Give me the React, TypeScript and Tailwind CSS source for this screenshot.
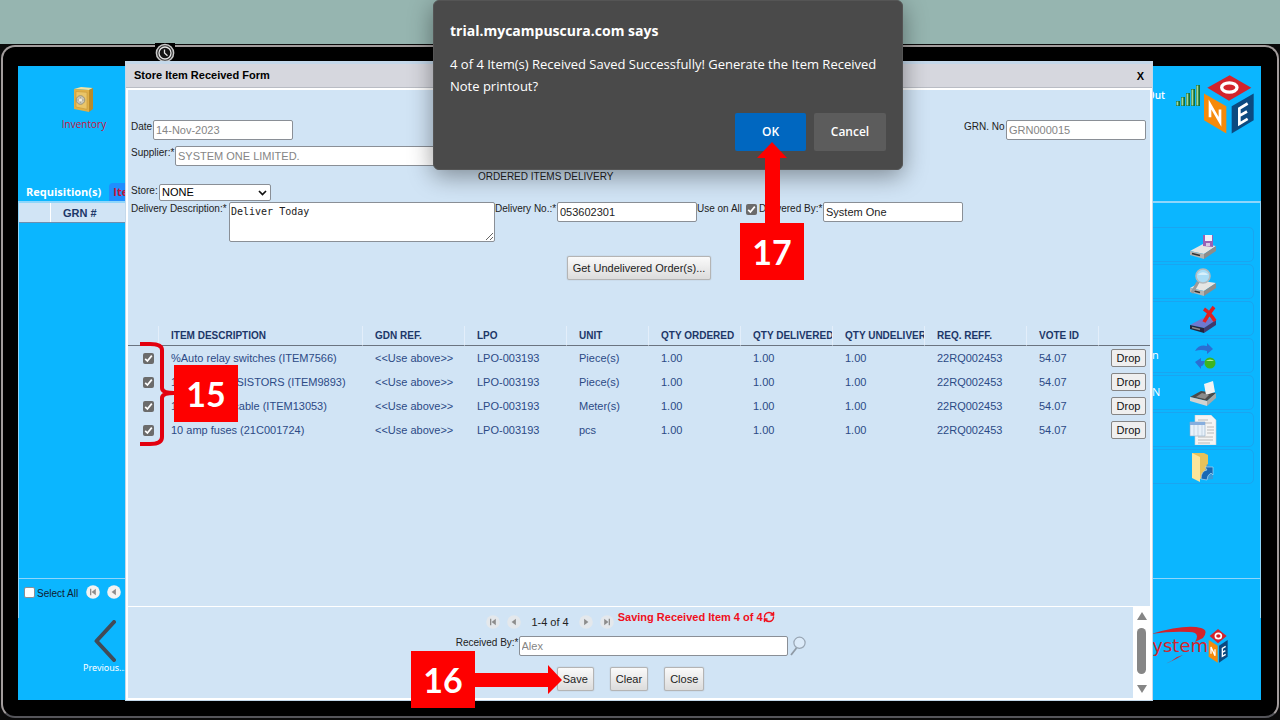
import type { ReactNode } from "react";
import { RefreshCw } from "lucide-react";

type Item = { name: string; lpo: string; unit: string };

const ITEMS: Item[] = [
  { name: "%Auto relay switches (ITEM7566)", lpo: "LPO-003193", unit: "Piece(s)" },
  { name: "100 OHM RESISTORS (ITEM9893)", lpo: "LPO-003193", unit: "Piece(s)" },
  { name: "16mm Coax cable (ITEM13053)", lpo: "LPO-003193", unit: "Meter(s)" },
  { name: "10 amp fuses (21C001724)", lpo: "LPO-003193", unit: "pcs" },
];

const HEADERS = [
  "ITEM DESCRIPTION",
  "GDN REF.",
  "LPO",
  "UNIT",
  "QTY ORDERED",
  "QTY DELIVERED",
  "QTY UNDELIVERED",
  "REQ. REFF.",
  "VOTE ID",
];

const FIELD =
  "h-5 rounded-[2px] border border-[#8a8f96] bg-white px-[2px] text-[11px] leading-4 text-[#222] disabled:text-[#858585]";
const LABEL = "shrink-0 whitespace-nowrap text-[10px] leading-[14px]";
const SOFT_BUTTON =
  "h-6 rounded-[2px] border border-[#b4b4b4] bg-linear-to-b from-[#fafafa] to-[#dcdcdc] px-[5px] text-[11px] leading-4 text-[#222] shadow-[0_0_1px_#999]";

function Tick({ id, label }: { id: string; label: string }) {
  return (
    <span className="relative inline-flex h-[11px] w-[11px] shrink-0">
      <input
        id={id}
        type="checkbox"
        aria-label={label}
        defaultChecked
        className="h-[11px] w-[11px] appearance-none rounded-[2px] bg-white checked:bg-[#6b6b6b]"
      />
      <svg viewBox="0 0 11 11" className="pointer-events-none absolute inset-0" aria-hidden="true">
        <path d="M2.2 5.8 4.4 8 8.8 2.6" fill="none" stroke="#fff" strokeWidth="1.7" />
      </svg>
    </span>
  );
}

function PagerButton({ label, kind, strong }: { label: string; kind: "first" | "prev" | "next" | "last"; strong?: boolean }) {
  const flip = kind === "next" || kind === "last";
  const bar = kind === "first" || kind === "last";
  return (
    <button type="button" aria-label={label} className="h-[14px] w-[14px] shrink-0">
      <svg viewBox="0 0 14 14" className="h-full w-full" aria-hidden="true">
        <circle cx="7" cy="7" r="6.8" fill={strong ? "#f4f3f1" : "#e4e8ec"} />
        <g transform={flip ? "matrix(-1 0 0 1 14 0)" : undefined} fill="#8d8d8d">
          <path d={bar ? "M9.8 3.8v6.4L5.6 7z" : "M8.9 3.8v6.4L4.6 7z"} />
          {bar && <path d="M4 3.8h1.3v6.4H4z" />}
        </g>
      </svg>
    </button>
  );
}

function Cube() {
  return (
    <svg viewBox="0 0 150 176" className="h-[59px] w-[50px]" role="img" aria-label="ONE">
      <path d="M77 0 142 38 75 77 10 38z" fill="#d3242c" />
      <path d="M0 55 67 93v82L0 135z" fill="#f58a0c" />
      <path d="M83 93 149 55v80l-66 40z" fill="#0c4a80" />
      <ellipse cx="76" cy="37" rx="23" ry="14" fill="none" stroke="#fff" strokeWidth="10" />
      <path d="M18 126V88l30 52V103" fill="none" stroke="#fff" strokeWidth="8" />
      <path d="M131 85l-25 15v46l25-15M106 122l23-13" fill="none" stroke="#fff" strokeWidth="8" />
    </svg>
  );
}

function SmallCube() {
  return (
    <svg viewBox="0 0 60 102" className="h-[34px] w-5" role="img" aria-label="ONE">
      <path d="M30 0 56 21 30 43 5 21z" fill="#d3242c" />
      <path d="M2 33 29 50v51L2 83z" fill="#f58a0c" />
      <path d="M33 50 59 33v50L33 101z" fill="#0c4a80" />
      <ellipse cx="31" cy="21" rx="9" ry="8" fill="none" stroke="#fff" strokeWidth="5" />
      <path d="M9 74V54l12 26V61" fill="none" stroke="#fff" strokeWidth="4" />
      <path d="M53 52l-10 6v24l10-6M43 70l9-5" fill="none" stroke="#fff" strokeWidth="4" />
    </svg>
  );
}

function SafeIcon() {
  return (
    <svg viewBox="0 0 24 28" className="h-7 w-6" aria-hidden="true">
      <path d="M2 3 9 1l12 1-4 2z" fill="#f6e2a0" />
      <path d="M2 3l15 1v22L2 23z" fill="#e0b046" />
      <path d="M17 4l4-2v21l-4 3z" fill="#b98a2a" />
      <path d="M4 5.500l11 .8v17L4 21z" fill="#eac568" stroke="#c7983a" strokeWidth=".6" />
      <circle cx="8.500" cy="14" r="4.300" fill="#c9c6b8" stroke="#8c8874" strokeWidth=".8" />
      <path d="M8.500 11v6M5.500 14h6" stroke="#a5a18c" strokeWidth=".9" />
      <circle cx="8.500" cy="14" r="1.600" fill="#f2f0e6" />
    </svg>
  );
}

function Drive({ dark }: { dark?: boolean }) {
  return (
    <g>
      <path d="M1 21 14 14l13 2-12 8z" fill={dark ? "#6f78cf" : "#e6e6e4"} />
      <path d="M1 21l14 3v5L1 25z" fill={dark ? "#24243c" : "#b4b4b2"} />
      <path d="M15 24l12-8v5l-12 8z" fill={dark ? "#3f3a6e" : "#8d8d8b"} />
      <path d="M3 23.500l8 2" stroke={dark ? "#888" : "#333"} strokeWidth="1.400" />
    </g>
  );
}

const ACTIONS: { label: string; tail?: string; icon: ReactNode }[] = [
  {
    label: "Save record",
    icon: (
      <>
        <Drive />
        <path d="M14 5h10v12l-10-1z" fill="#9b62b4" />
        <path d="M16 5h7v6h-7z" fill="#f3f0f8" />
        <path d="M17 13h4v3h-4z" fill="#d9c8e4" />
      </>
    ),
  },
  {
    label: "Search records",
    icon: (
      <>
        <Drive />
        <path d="M9 15 3 26" stroke="#9a9a9a" strokeWidth="3" />
        <circle cx="14" cy="9" r="7" fill="#a9dcf6" stroke="#b4babd" strokeWidth="1.600" />
        <path d="M9 8a6 6 0 0 1 10 0z" fill="#d7f0fc" />
      </>
    ),
  },
  {
    label: "Delete record",
    icon: (
      <>
        <Drive dark />
        <path d="M15 5q6 4 11 12M25 3q-5 6-10 15" stroke="#df2020" strokeWidth="3.600" fill="none" />
      </>
    ),
  },
  {
    label: "Reload selection",
    tail: "n",
    icon: (
      <>
        <path d="M6 10Q10 3 18 5V2l6 6-6 5v-3q-6-2-12 0z" fill="#2b6fd2" />
        <path d="M16 20q-2 6-4 5v3l-6-7 6-4v3z" fill="#2b6fd2" />
        <circle cx="21" cy="22" r="5.500" fill="#3fb51f" />
        <path d="M17 20a5 4 0 0 1 8 0z" fill="#b4ec92" />
      </>
    ),
  },
  {
    label: "Print GRN",
    tail: "N",
    icon: (
      <>
        <path d="M1 19 12 13l15 2-9 8z" fill="#4b4b4b" />
        <path d="M15 6l9-3 2 11-9 3z" fill="#f3f3f3" />
        <path d="M1 19l17 4v5L1 23z" fill="#d2d2d0" />
        <path d="M18 23l9-8v5l-9 8z" fill="#a8a8a6" />
        <path d="M7 19l6-4 7 2-4 4z" fill="#8b8b8b" />
      </>
    ),
  },
  {
    label: "View report",
    icon: (
      <>
        <path d="M6 0h16l5 5v25H6z" fill="#f4f4f4" stroke="#c9ced2" strokeWidth=".6" />
        <path d="M9 5h10M9 8h14M18 12h7M18 15h7M18 18h7M9 22h15M9 25h15M9 28h12" stroke="#b9b9b9" strokeWidth="1.200" />
        <path d="M1 7h15v14H1z" fill="#e8f1fa" stroke="#8eabc8" strokeWidth=".6" />
        <path d="M1 7h15v3H1z" fill="#86aede" />
        <path d="M5 10v11M9 10v11M13 10v11" stroke="#b9c9d9" strokeWidth=".7" />
      </>
    ),
  },
  {
    label: "Open folder",
    icon: (
      <>
        <path d="M3 1h12l4 2v22l-8 2z" fill="#e6c25a" />
        <path d="M3 1l8 4v25l-8-4z" fill="#fbe59a" />
        <path d="M18 12l6 4v11l-10 1z" fill="#3a9bd8" />
        <path d="M12 27q0-8 6-9l-2-3h8v8l-2-2q-4 2-4 7z" fill="#1668b4" stroke="#bfe3f8" strokeWidth=".6" />
      </>
    ),
  },
];

function SignalBars() {
  return (
    <svg viewBox="0 0 26 22" className="h-[22px] w-[26px]" aria-hidden="true">
      {[0, 1, 2, 3, 4].map((i) => (
        <g key={i}>
          <rect x={1 + i * 5} y={17 - i * 4} width="4" height={5 + i * 4} fill="#15703a" />
          <rect x={1.5 + i * 5} y={17.500 - i * 4} width="1.800" height={4 + i * 4} fill="#a5d79c" />
        </g>
      ))}
    </svg>
  );
}

function Background() {
  return (
    <div className="flex flex-1 flex-col overflow-hidden bg-[#0bb6ff] font-['Open_Sans',sans-serif] text-[11px] text-white">
      <header className="flex h-[135px] shrink-0 justify-between">
        <div className="flex flex-col pl-2">
          <a href="#inventory" className="ml-[36px] flex w-[44px] flex-col items-center pt-5 text-[10px] text-[#c8143c]">
            <SafeIcon />
            <span className="leading-5">Inventory</span>
          </a>
          <nav className="mt-auto flex items-center font-bold">
            <a href="#requisitions" className="leading-[18px]">Requisition(s)</a>
            <a href="#received" className="ml-[8px] rounded-t-[4px] bg-[#1f8fff] px-1 leading-[18px] text-[#c8143c]">
              Items Received
            </a>
          </nav>
        </div>
        <div className="flex items-start pr-[7px] pt-[9px]">
          <a href="#signout" className="mt-[11px] text-[10px] font-semibold leading-[18px]">Sign Out</a>
          <span className="ml-[10px] mt-[9px]"><SignalBars /></span>
          <span className="ml-[3px]"><Cube /></span>
        </div>
      </header>
      <div className="flex flex-1 flex-col border-x border-t-2 border-[#8fd6fb]">
        <div className="flex flex-1">
          <div className="flex-1">
            <div className="flex h-5 w-full border-b border-[#6c8fb0] bg-[#d1e4f5] font-['Liberation_Sans',sans-serif] text-[11px] font-bold leading-5 text-[#1d3768]">
              <span className="w-8 border-r border-white" />
              <span className="pl-[12px]">GRN #</span>
            </div>
          </div>
          <ul className="flex w-[140px] flex-col gap-[2px] pr-[6px] pt-6">
            {ACTIONS.map((a) => (
              <li key={a.label}>
                <button
                  type="button"
                  aria-label={a.label}
                  className="flex h-[35px] w-full items-center rounded-[5px] border border-[#1aa5f0] pl-[31px]"
                >
                  <span className="w-[6px] text-right text-[11px]">{a.tail}</span>
                  <svg viewBox="0 0 28 30" className="ml-[31px] h-[30px] w-7" aria-hidden="true">
                    {a.icon}
                  </svg>
                </button>
              </li>
            ))}
          </ul>
        </div>
        <div className="flex h-10 shrink-0 items-start border-t border-[#8fd6fb] pl-[5px] pt-[6px] font-['Liberation_Sans',sans-serif] text-[10px] text-[#102030]">
          <input id="select-all" type="checkbox" className="mt-[2px] h-[11px] w-[11px] appearance-none rounded-[2px] border border-[#8a8f96] bg-white" />
          <label htmlFor="select-all" className="ml-[2px] w-[42px] whitespace-nowrap leading-[18px]">Select All</label>
          <span className="ml-[7px] flex gap-[7px]">
            <PagerButton label="First records" kind="first" strong />
            <PagerButton label="Previous records" kind="prev" strong />
          </span>
        </div>
      </div>
      <footer className="flex h-[82px] shrink-0 justify-between">
        <a href="#previous" className="ml-[65px] flex flex-col items-start font-['Noto_Sans',sans-serif] text-[9px]">
          <svg viewBox="0 0 22 42" className="ml-[11px] mt-[2px] h-[42px] w-[22px]" aria-hidden="true">
            <path d="M20 2 2.500 21 20 40" fill="none" stroke="#424b57" strokeWidth="4" strokeLinecap="round" strokeLinejoin="round" />
          </svg>
          <span className="leading-3">Previous...</span>
        </a>
        <div className="relative flex items-start pr-[33px] pt-[11px]">
          <svg viewBox="0 0 64 40" className="absolute right-[52px] top-[8px] h-10 w-16" aria-hidden="true">
            <path d="M6 8Q40-2 56 2q8 2 2 10l-8 4q6-10-6-10Q26 5 6 8z" fill="#d3242c" />
            <path d="M20 38q8-3 18-9l-6 2q-6 5-12 7z" fill="#d3242c" />
          </svg>
          <span className="pt-[5px] font-['DejaVu_Sans',sans-serif] text-[18px] leading-6 text-[#d3242c]">System</span>
          <SmallCube />
        </div>
      </footer>
    </div>
  );
}

function ReceivedForm() {
  return (
    <section
      aria-label="Store Item Received Form"
      className="absolute bottom-[19px] left-[125px] right-[127px] top-[61px] flex flex-col border border-t-[3px] border-[#c4d8ea] bg-white font-['Liberation_Sans',sans-serif] text-[11px] text-[#222]"
    >
      <div className="flex h-6 shrink-0 items-center justify-between border-b border-[#b9bcc4] bg-[#d6d7de] px-2 font-bold text-black">
        <h1>Store Item Received Form</h1>
        <button type="button" aria-label="Close form" className="leading-4">X</button>
      </div>
      <div className="mx-[2px] mt-[2px] flex-1 bg-[#d1e4f5] pt-[30px]">
        <div className="flex items-start pl-[3px] pr-1">
          <label htmlFor="date" className={`${LABEL} w-[22px]`}>Date</label>
          <input id="date" disabled defaultValue="14-Nov-2023" className={`${FIELD} w-[140px]`} />
          <label htmlFor="grn" className={`${LABEL} ml-auto w-[42px]`}>GRN. No</label>
          <input id="grn" disabled defaultValue="GRN000015" className={`${FIELD} w-[140px]`} />
        </div>
        <div className="mt-[6px] flex items-start pl-[3px]">
          <label htmlFor="supplier" className={`${LABEL} w-[44px]`}>Supplier:*</label>
          <input id="supplier" disabled defaultValue="SYSTEM ONE LIMITED." className={`${FIELD} w-[300px]`} />
        </div>
        <h2 className="mt-1 pl-[350px] text-[10px] leading-[14px]">ORDERED ITEMS DELIVERY</h2>
        <div className="flex items-start pl-[3px]">
          <label htmlFor="store" className={`${LABEL} w-[28px]`}>Store:</label>
          <span className="relative">
            <select id="store" className="h-[17px] w-[112px] appearance-none rounded-[2px] border border-[#8a8f96] bg-white px-[2px] text-[11px] leading-[15px] text-black">
              <option>NONE</option>
            </select>
            <svg viewBox="0 0 9 6" className="pointer-events-none absolute right-1 top-[6px] h-[6px] w-[9px]" aria-hidden="true">
              <path d="M1 1l3.500 3.500L8 1" fill="none" stroke="#111" strokeWidth="1.700" />
            </svg>
          </span>
        </div>
        <div className="mt-px flex items-start pl-[3px]">
          <label htmlFor="description" className={`${LABEL} w-[98px]`}>Delivery Description:*</label>
          <textarea
            id="description"
            defaultValue="Deliver Today"
            className="h-10 w-[266px] rounded-[2px] border border-[#8a8f96] bg-white px-px pt-[2px] font-['DejaVu_Sans_Mono',monospace] text-[10px] leading-[14px] text-[#222]"
          />
          <label htmlFor="delivery-no" className={`${LABEL} w-[62px]`}>Delivery No.:*</label>
          <input id="delivery-no" defaultValue="053602301" className={`${FIELD} w-[140px]`} />
          <label htmlFor="use-all" className={`${LABEL} w-[49px]`}>Use on All</label>
          <span className="mt-[2px] flex"><Tick id="use-all" label="Use on All" /></span>
          <label htmlFor="delivered-by" className={`${LABEL} ml-[2px] w-[64px]`}>Delivered By:*</label>
          <input id="delivered-by" defaultValue="System One" className={`${FIELD} w-[140px]`} />
        </div>
        <div className="mt-[14px] flex justify-center">
          <button type="button" className={SOFT_BUTTON}>Get Undelivered Order(s)...</button>
        </div>
        <table className="mt-[46px] w-full table-fixed border-separate border-spacing-0 text-left text-[#2c4a86]">
          <colgroup>
            <col className="w-[31px]" />
            <col />
            <col className="w-[102px]" />
            <col className="w-[102px]" />
            <col className="w-[82px]" />
            <col className="w-[92px]" />
            <col className="w-[92px]" />
            <col className="w-[92px]" />
            <col className="w-[102px]" />
            <col className="w-[72px]" />
            <col className="w-[51px]" />
          </colgroup>
          <thead>
            <tr className="text-[10px] text-[#1d3768]">
              <th aria-label="Select" className="h-5 border-b border-r border-b-[#6b7480] border-r-[#e3eefa] p-0" />
              {HEADERS.map((h) => (
                <th key={h} className="h-5 overflow-hidden whitespace-nowrap border-b border-r border-b-[#6b7480] border-r-[#e3eefa] p-0 pl-3 font-bold leading-4">
                  {h}
                </th>
              ))}
              <th aria-label="Action" className="h-5 border-b border-b-[#6b7480] p-0" />
            </tr>
          </thead>
          <tbody>
            {ITEMS.map((it, i) => (
              <tr key={it.name} className="h-6 *:p-0 *:pl-3 *:leading-4">
                <td>
                  <span className="flex justify-end pr-[5px]"><Tick id={`item-${i}`} label={it.name} /></span>
                </td>
                <td className="whitespace-nowrap">{it.name}</td>
                <td>&lt;&lt;Use above&gt;&gt;</td>
                <td>{it.lpo}</td>
                <td>{it.unit}</td>
                <td>1.00</td>
                <td>1.00</td>
                <td>1.00</td>
                <td>22RQ002453</td>
                <td>54.07</td>
                <td>
                  <button type="button" className="flex h-[18px] w-[35px] items-center justify-center rounded-[2px] border border-[#858585] bg-[#efefef] text-[#111]">
                    Drop
                  </button>
                </td>
              </tr>
            ))}
          </tbody>
        </table>
      </div>
      <div className="mx-[2px] mb-[2px] mt-px flex h-[91px] shrink-0">
        <div className="flex flex-1 flex-col items-center bg-[#d1e4f5] pt-[3px]">
          <div className="flex items-start">
            <div className="mt-1 flex items-center leading-4">
              <PagerButton label="First page" kind="first" />
              <span className="ml-[7px] flex"><PagerButton label="Previous page" kind="prev" /></span>
              <span className="mx-[10px]">1-4 of 4</span>
              <PagerButton label="Next page" kind="next" />
              <span className="ml-[7px] flex"><PagerButton label="Last page" kind="last" /></span>
            </div>
            <p className="ml-1 flex items-center font-bold leading-[14px] text-[#f0101c]">
              Saving Received Item 4 of 4
              <RefreshCw size={12} strokeWidth={3} />
            </p>
          </div>
          <div className="mt-[6px] flex items-start">
            <label htmlFor="received-by" className={`${LABEL} w-[63px] text-right`}>Received By:*</label>
            <input id="received-by" disabled defaultValue="Alex" className={`${FIELD} w-[269px]`} />
            <button type="button" aria-label="Find person" className="ml-[2px]">
              <svg viewBox="0 0 16 20" className="h-5 w-4" aria-hidden="true">
                <path d="M6.500 12 1 19" stroke="#8f9aa5" strokeWidth="1.800" />
                <circle cx="9.500" cy="6.800" r="5.600" fill="#dcebf9" stroke="#98a5b3" strokeWidth="1.200" />
              </svg>
            </button>
          </div>
          <div className="mt-[11px] flex gap-4">
            <button type="button" className={SOFT_BUTTON}>Save</button>
            <button type="button" className={SOFT_BUTTON}>Clear</button>
            <button type="button" className={SOFT_BUTTON}>Close</button>
          </div>
        </div>
        <div className="flex w-[17px] flex-col items-center bg-white py-[5px]" aria-hidden="true">
          <svg viewBox="0 0 10 8" className="h-2 w-[10px]"><path d="M5 0l5 8H0z" fill="#868686" /></svg>
          <span className="mt-2 h-[46px] w-[9px] rounded-full bg-[#868686]" />
          <svg viewBox="0 0 10 8" className="mt-auto h-2 w-[10px]"><path d="M5 8l5-8H0z" fill="#868686" /></svg>
        </div>
      </div>
    </section>
  );
}

function Alert() {
  return (
    <div
      role="alertdialog"
      aria-labelledby="alert-title"
      className="absolute left-[433px] top-0 w-[470px] rounded-[6px] border border-[#555] bg-[#4a4a4a] px-4 pb-[18px] pt-5 font-['Open_Sans',sans-serif] text-[13px] text-white shadow-[0_6px_24px_rgba(0,0,0,0.4)]"
    >
      <h2 id="alert-title" className="text-sm font-bold leading-5">trial.mycampuscura.com says</h2>
      <p className="mt-3 leading-[22px]">
        4 of 4 Item(s) Received Saved Successfully! Generate the Item Received Note printout?
      </p>
      <div className="mt-4 flex justify-end gap-2 text-xs font-semibold">
        <button type="button" className="h-[38px] w-[71px] rounded-[2px] bg-[#0067c0]">OK</button>
        <button type="button" className="h-[38px] w-[72px] rounded-[2px] bg-[#5c5c5c]">Cancel</button>
      </div>
    </div>
  );
}

const STEP =
  "absolute flex h-[57px] w-16 items-center justify-center bg-[#fe0000] font-['Lato',sans-serif] text-[34px] font-bold leading-none text-white";

export default function App() {
  return (
    <div className="relative flex min-h-screen flex-col overflow-hidden bg-[#0b0b0b]">
      <div className="h-11 shrink-0 bg-[#96b5b0]" />
      <div className="mx-px mb-[2px] mt-px flex flex-1 flex-col rounded-[14px] border-2 border-[#a39d9d] border-b-[#55555a] bg-black pb-4 pl-[15px] pr-4 pt-[19px]">
        <Background />
      </div>
      <svg viewBox="0 0 20 20" className="absolute left-[155px] top-[43px] h-5 w-5 bg-black" aria-hidden="true">
        <circle cx="10" cy="10" r="8.600" fill="#333" stroke="#c9c9c9" strokeWidth="1.500" />
        <circle cx="10" cy="10" r="6" fill="#151515" stroke="#e4e4e4" strokeWidth="1.300" />
        <path d="M9.500 6.500V10l3 2.800" fill="none" stroke="#e4e4e4" strokeWidth="1.300" />
      </svg>
      <ReceivedForm />
      <Alert />
      <svg viewBox="0 0 36 106" className="absolute left-[139px] top-[341px] h-[106px] w-9" aria-hidden="true">
        <path d="M1 3h10q12 0 12 6v38q0 5 12 5-12 0-12 5v39q0 7-12 7H1" fill="none" stroke="#e3000f" strokeWidth="4" />
      </svg>
      <div className={`${STEP} left-[174px] top-[365px]`}>15</div>
      <svg viewBox="0 0 88 30" className="absolute left-[475px] top-[665px] h-[30px] w-[88px]" aria-hidden="true">
        <path d="M0 8h73V0l14 15-14 14v-7H0z" fill="#fe0000" />
      </svg>
      <div className={`${STEP} left-[411px] top-[651px]`}>16</div>
      <svg viewBox="0 0 30 82" className="absolute left-[757px] top-[142px] h-[82px] w-[30px]" aria-hidden="true">
        <path d="M15 0l15 16h-7v66H8V16H0z" fill="#fe0000" />
      </svg>
      <div className={`${STEP} left-[740px] top-[223px]`}>17</div>
    </div>
  );
}
